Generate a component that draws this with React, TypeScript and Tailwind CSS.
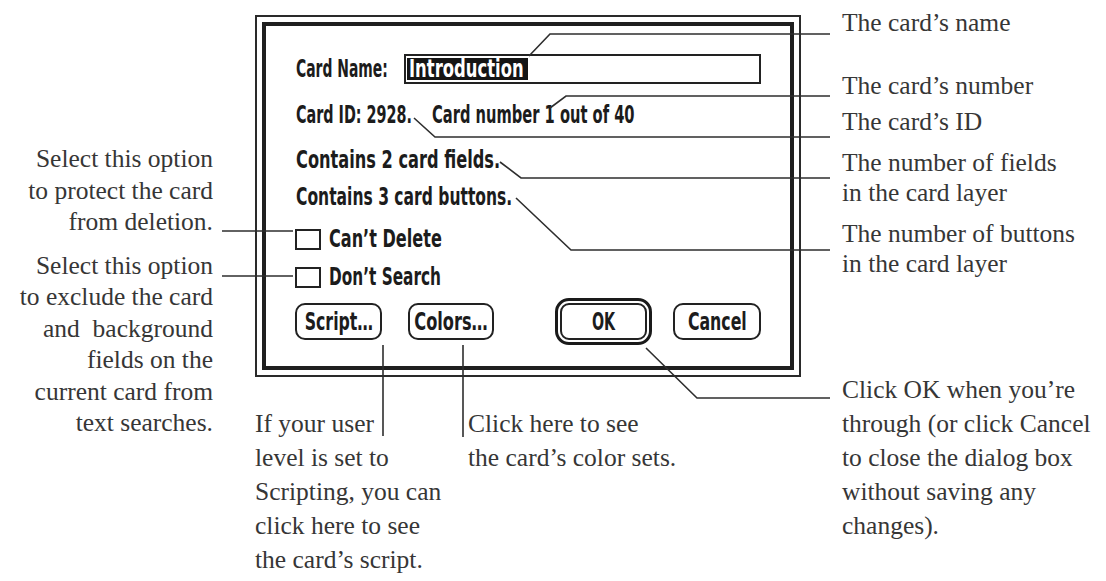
import React from 'react'

const serif = "font-['Liberation_Serif','DejaVu_Serif',serif] text-[25.5px] text-[#363636]"

const Chi = ({ s, children, o = 'origin-left' }: any) => (
  <span className={`inline-block whitespace-nowrap ${o} ${s}`}>{children}</span>
)

const Btn = ({ w, s, label }: any) => (
  <div className={`${w} h-[37px] border-2 border-[#222] rounded-[10px] flex items-center justify-center`}>
    <Chi s={s} o="origin-center">{label}</Chi>
  </div>
)

const Check = ({ s, label, mt }: any) => (
  <div className={`${mt} h-[24px] flex items-center`}>
    <div className="-ml-[1px] w-[26px] h-[21px] border-2 border-[#222]" />
    <div className="ml-[8px]">
      <Chi s={s}>{label}</Chi>
    </div>
  </div>
)

const Dialog = () => (
  <div className="mt-[15px] w-[546px] h-[362px] border-2 border-[#2a2a2a] p-[5px]">
    <div className="h-full border-[4px] border-[#1f1f1f] bg-white pl-[30px] pt-[28px] flex flex-col font-['DejaVu_Sans_Condensed','DejaVu_Sans',sans-serif] font-bold text-[24px] leading-[24px] text-[#1c1c1c]">
      <div className="flex items-center h-[30px]">
        <div className="w-[108px]">
          <Chi s="scale-x-[0.645]">Card Name:</Chi>
        </div>
        <div className="w-[357px] h-[30px] border-2 border-[#222] flex items-center pl-[1px]">
          <div className="h-[22px] w-[121px] shrink-0 bg-[#151515] text-white flex items-center pl-[2px]">
            <Chi s="scale-x-[0.76]">Introduction</Chi>
          </div>
        </div>
      </div>
      <div className="mt-[19px] h-[24px] flex">
        <div className="w-[136px]">
          <Chi s="scale-x-[0.665]">Card ID: 2928.</Chi>
        </div>
        <Chi s="scale-x-[0.68]">Card number 1 out of 40</Chi>
      </div>
      <div className="mt-[21px] h-[24px]">
        <Chi s="scale-x-[0.75]">Contains 2 card fields.</Chi>
      </div>
      <div className="mt-[13px] h-[24px]">
        <Chi s="scale-x-[0.72]">Contains 3 card buttons.</Chi>
      </div>
      <Check mt="mt-[18px]" s="scale-x-[0.745]" label="Can’t Delete" />
      <Check mt="mt-[14px]" s="scale-x-[0.71]" label="Don’t Search" />
      <div className="mt-[9px] h-[47px] flex items-center">
        <div className="-ml-[1px]">
          <Btn w="w-[87px]" s="scale-x-[0.73]" label="Script…" />
        </div>
        <div className="ml-[26px]">
          <Btn w="w-[86px]" s="scale-x-[0.75]" label="Colors…" />
        </div>
        <div className="ml-[61px] w-[97px] h-[47px] border-[3px] border-[#1a1a1a] rounded-[14px] p-[2px]">
          <div className="h-full border-2 border-[#222] rounded-[9px] flex items-center justify-center">
            <Chi s="scale-x-[0.66]" o="origin-center">OK</Chi>
          </div>
        </div>
        <div className="ml-[21px]">
          <Btn w="w-[88px]" s="scale-x-[0.73]" label="Cancel" />
        </div>
      </div>
    </div>
  </div>
)

const Leaders = () => (
  <svg className="absolute inset-0 pointer-events-none" width="1106" height="581" viewBox="0 0 1106 581">
    <g fill="none" stroke="#2e2e2e" strokeWidth="1.6">
      <polyline points="529,56 550,34 830,34" />
      <polyline points="550,108 566,96 830,96" />
      <polyline points="414,118 435,137 830,137" />
      <polyline points="500,162 521,178 830,178" />
      <polyline points="516,198 571,250 830,250" />
      <polyline points="646,348 697,398 830,398" />
      <line x1="222" y1="231" x2="293" y2="231" />
      <line x1="222" y1="276" x2="293" y2="276" />
      <line x1="383" y1="345" x2="383" y2="436" />
      <line x1="463" y1="345" x2="463" y2="437" />
    </g>
  </svg>
)

export default function App() {
  return (
    <div className={`relative w-[1106px] h-[581px] overflow-hidden bg-white grid grid-cols-[255px_546px_1fr] grid-rows-[377px_1fr] ${serif}`}>
      <div className="col-start-1 row-start-1 row-span-2 pr-[42px] pt-[143px] text-right leading-[31.5px]">
        <p>
          Select this option
          <br />
          to protect the card
          <br />
          from deletion.
        </p>
        <p className="mt-[12px]">
          Select this option
          <br />
          to exclude the card
          <br />
          and&nbsp; background
          <br />
          fields on the
          <br />
          current card from
          <br />
          text searches.
        </p>
      </div>
      <div className="col-start-2 row-start-1">
        <Dialog />
      </div>
      <div className="col-start-3 row-start-1 row-span-2 pl-[41px] leading-[30px]">
        <p className="mt-[8px]">The card’s name</p>
        <p className="mt-[33px]">The card’s number</p>
        <p className="mt-[6px]">The card’s ID</p>
        <p className="mt-[11px]">
          The number of fields
          <br />
          in the card layer
        </p>
        <p className="mt-[11px]">
          The number of buttons
          <br />
          in the card layer
        </p>
        <p className="mt-[94px] leading-[34px] whitespace-nowrap">
          Click OK when you’re
          <br />
          through (or click Cancel
          <br />
          to close the dialog box
          <br />
          without saving any
          <br />
          changes).
        </p>
      </div>
      <div className="col-start-2 row-start-2 flex pt-[30px] leading-[34px]">
        <p className="w-[213px] whitespace-nowrap">
          If your user
          <br />
          level is set to
          <br />
          Scripting, you can
          <br />
          click here to see
          <br />
          the card’s script.
        </p>
        <p className="whitespace-nowrap">
          Click here to see
          <br />
          the card’s color sets.
        </p>
      </div>
      <Leaders />
    </div>
  )
}
